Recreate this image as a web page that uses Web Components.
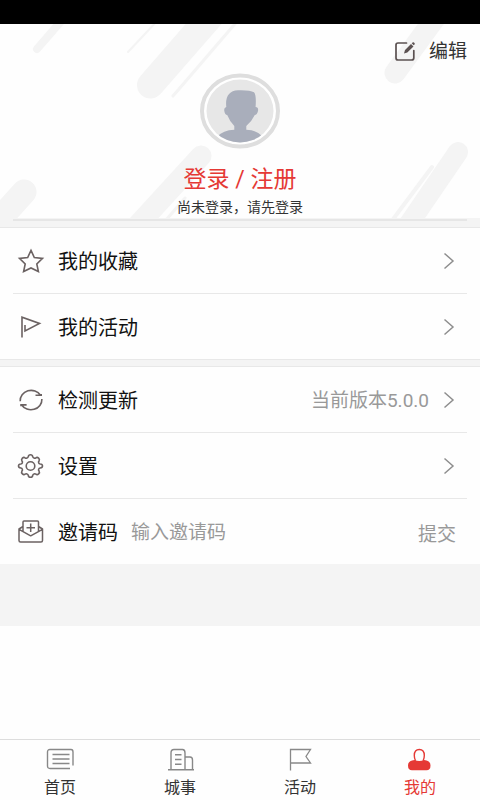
<!DOCTYPE html>
<html lang="zh-CN">
<head>
<meta charset="utf-8">
<meta name="viewport" content="width=device-width, initial-scale=1">
<title>我的</title>
<style>
  html, body { margin: 0; }
  body {
    font-family: Roboto, "Noto Sans CJK SC", sans-serif;
    color: #111;
    background: #fefefe;
    --muted: #999;
    --accent: #e53935;
    --line: #e8e8e8;
    --band: #f4f4f4;
  }
</style>
</head>
<body>
<profile-page></profile-page>

<script>
const icons = {
  edit: [24, 24, `<g fill="none" stroke="#5b5151" stroke-width="1.700" stroke-linecap="round"><path d="M13.500 3H5Q3 3 3 5V18Q3 20 5 20H18.500Q20.800 20 20.800 18V10.500"/></g><path d="M11 13.500l1-3.600 6-5.900 2.500 2.500-6.200 6zM18.700 3.300l.9-.8q.7-.5 1.400.1l.6.600q.5.700-.1 1.300l-.8.800z" fill="#5b5151"/>`],
  star: [28, 28, `<path d="M14 3.300l3.300 7.200 8.200.9-5.700 5.500 1.600 7.600-7.400-3.500-7.400 3.500 1.600-7.600L2.500 11.400l8.200-.9z" fill="none" stroke="#6b6262" stroke-width="1.600"/>`],
  pennant: [28, 28, `<path d="M5 24.500V4.200L22.500 10.500 8 18V12" fill="none" stroke="#6b6262" stroke-width="1.600"/>`],
  refresh: [28, 28, `<path d="M3.200 15.200A11 10.300 0 0 1 23.500 9.200M18.500 9.300h5.700V8M24.900 13A11 10.300 0 0 1 4.500 18.800M9.600 18.900H4v1.300" fill="none" stroke="#6b6262" stroke-width="1.600"/>`],
  gear: [28, 28, `<g fill="none" stroke="#6b6262" stroke-width="1.600" stroke-linejoin="round"><circle cx="13.500" cy="14" r="4.300"/><path d="M11.300 4.600Q11.500 2.700 13.500 2.700T15.700 4.600Q16 5.700 17 6Q18 6.500 18.900 5.800Q20.200 4.800 21.600 6.100T22 9.100Q21.200 10 21.700 11Q22 11.800 23.200 12Q25.500 12.200 25.500 14T23.200 16Q22 16.200 21.700 17Q21.200 18 22 18.900Q23 20.500 21.600 21.900T18.900 22.200Q18 21.500 17 22Q16 22.300 15.700 23.400Q15.500 25.300 13.500 25.300T11.300 23.400Q11 22.300 10 22Q9 21.500 8.100 22.200Q6.800 23.200 5.400 21.900T5 18.900Q5.800 18 5.300 17Q5 16.200 3.800 16Q1.500 15.800 1.500 14T3.800 12Q5 11.800 5.300 11Q5.800 10 5 9.100Q4 7.500 5.400 6.100T8.100 5.800Q9 6.500 10 6Q11 5.700 11.300 4.600z"/></g>`],
  invite: [28, 28, `<g fill="none" stroke="#6b6262" stroke-width="1.500" stroke-linejoin="round"><path d="M6 13.800V4Q6 3 7 3H20.500Q21.500 3 21.500 4V13.800M6 8.500L2 11V22.500Q2 24 3.500 24H24Q25.500 24 25.500 22.500V11L21.500 8.500M2 11.300L13.700 17.800 25.500 11.300M13.700 5.500v8.500M9.500 9.700h8.500"/></g>`],
  chevron: [12, 18, `<path d="M1.500 1.500L10 9 1.500 16.500" fill="none" stroke="#8e8e8e" stroke-width="1.500"/>`],
  news: [28, 24, `<path d="M24 20.500H4Q1.500 20.500 1.500 18V4Q1.500 1.500 4 1.500H25Q27 1.500 27 4V17.500M6.500 6.500H23.500M6.500 11H23.500M6.500 15.500H23.500" fill="none" stroke="#888" stroke-width="1.400"/>`],
  city: [28, 24, `<path d="M2 21.800H28M5 21.500V5Q5 1.500 8 1.500H16.500Q19 1.500 19 5V21.500M19 9H24Q26.500 9 26.500 12V21.500M9 6.800H15.500M9 11.500H15.500M9 16.200H15.500" fill="none" stroke="#888" stroke-width="1.400"/>`],
  flag: [28, 24, `<path d="M4.500 22.500V1.500H24.500L20 8.500 24.500 15H4.500" fill="none" stroke="#888" stroke-width="1.300"/>`],
  person: [28, 24, `<path d="M9.500 12.800Q8.300 10.500 8.300 7.500Q8.300 1.500 13.300 1.500T18.300 7.500Q18.300 10.500 17.100 12.800" fill="none" stroke="#e53935" stroke-width="1.400"/><path d="M8.500 12Q13.300 13.800 18.100 12Q24.500 12.500 24.500 17.500Q24.500 22.300 20.500 22.300H6Q2 22.300 2 17.500Q2 12.500 8.500 12z" fill="#e53935"/>`]
};

function define(name, html, setup) {
  const template = document.createElement('template');
  template.innerHTML = html;
  customElements.define(name, class extends HTMLElement {
    connectedCallback() {
      if (this.shadowRoot) return;
      const root = this.attachShadow({ mode: 'open' });
      root.append(template.content.cloneNode(true));
      if (setup) setup(this, root);
    }
  });
}

define('line-icon', `<style>
  :host { display: block; flex: none; }
  svg { display: block; }
</style>`, (host, root) => {
  const [w, h, body] = icons[host.getAttribute('name')];
  root.innerHTML += `<svg width="${w}" height="${h}" viewBox="0 0 ${w} ${h}" aria-hidden="true">${body}</svg>`;
});

define('user-avatar', `<style>
  :host { display: block; }
  svg { display: block; }
</style>
<svg width="80" height="76" viewBox="0 0 80 76" role="img" aria-label="头像">
  <defs><clipPath id="face"><ellipse cx="40" cy="38" rx="33.500" ry="31.500"/></clipPath></defs>
  <ellipse cx="40" cy="38" rx="38" ry="35.500" fill="#fff" stroke="#dedede" stroke-width="4"/>
  <ellipse cx="40" cy="38" rx="33.500" ry="31.500" fill="#e7e7e7"/>
  <path clip-path="url(#face)" d="M26.300 34Q24.500 18 38 17.200Q50 16.800 54 19.300Q56.500 22 55.600 34Q58.700 34 58 38Q57 42 54.800 42Q52 48 46.300 53V56.800Q56 57 62 63L58 72H22L17 64Q23 57 34.300 56.800V53Q29.500 48 27.200 42Q25 42 24.300 38Q23.700 34.500 26.300 34z" fill="#a9aebb"/>
</svg>`);

define('profile-header', `<style>
  :host { display: block; position: relative; background: #fefefe; overflow: hidden; }
  .stripes { position: absolute; inset: 0; width: 100%; height: 100%; }
  .content { position: relative; display: flex; flex-direction: column; align-items: center; }
  button { font: inherit; color: inherit; background: none; border: 0; padding: 0; cursor: pointer; }
  .edit { align-self: flex-end; display: flex; align-items: center; gap: 12px; margin: 14px 13px 0 0; font-size: 19px; line-height: 28px; color: #333; }
  user-avatar { margin-top: 7px; }
  .login { margin-top: 14px; font-size: 23px; line-height: 34px; color: var(--accent); }
  p { margin: 0; padding-bottom: 1px; font-size: 14px; line-height: 20px; color: #333; }
</style>
<svg class="stripes" viewBox="0 0 480 194" preserveAspectRatio="none" aria-hidden="true">
  <g stroke="#f4f4f4" stroke-linecap="round" fill="none">
    <path stroke-width="8" d="M37 25L63-5"/>
    <path stroke-width="2" d="M128 28L158-4"/>
    <path stroke-width="27" d="M150.500 61L221-20"/>
    <path stroke-width="3" d="M173 72L240-6"/>
    <path stroke-width="21" d="M201 132L126 214"/>
    <path stroke-width="3" d="M185 174L160 203"/>
    <path stroke-width="25" d="M24 168L-12 208"/>
    <path stroke-width="21" d="M395 49L444-18"/>
    <path stroke-width="20" d="M458 128L400 213"/>
    <path stroke-width="4" d="M432 143L388 202"/>
  </g>
</svg>
<div class="content">
  <button class="edit"><line-icon name="edit"></line-icon>编辑</button>
  <user-avatar></user-avatar>
  <button class="login">登录 / 注册</button>
  <p>尚未登录，请先登录</p>
</div>`);

define('menu-group', `<style>
  :host { display: block; background: #fefefe; border-top: 1px solid #e8e8e8; }
</style><slot></slot>`);

define('menu-row', `<style>
  :host { display: block; }
  button { box-sizing: border-box; display: flex; align-items: center; width: 100%; min-height: 66px; margin: 0; padding: 0 25px 0 17px; border: 0; background: linear-gradient(var(--line), var(--line)) center bottom / calc(100% - 26px) 1px no-repeat; font: inherit; font-size: 20px; line-height: 30px; color: inherit; text-align: left; cursor: pointer; }
  :host([last]) button { background-size: 100% 1px; }
  .name, .detail { padding-top: 2px; }
  .name { margin-left: 13px; flex: 1; }
  .detail { font-size: 19px; color: var(--muted); margin-right: 14px; }
</style>
<button><span id="icon"></span><span class="name"><slot></slot></span><span class="detail"><slot name="detail"></slot></span><line-icon name="chevron"></line-icon></button>`,
(host, root) => {
  const icon = document.createElement('line-icon');
  icon.setAttribute('name', host.getAttribute('icon'));
  root.getElementById('icon').replaceWith(icon);
});

define('invite-row', `<style>
  :host { display: block; }
  form { display: flex; align-items: center; min-height: 65px; margin: 0; padding: 0 24px 0 17px; font-size: 20px; line-height: 30px; }
  label { margin: 0 13px; padding-top: 2px; white-space: nowrap; }
  input, button { font: inherit; font-size: 19px; border: 0; padding: 2px 0 0; background: none; outline: 0; }
  input { flex: 1; min-width: 0; color: inherit; }
  input::placeholder { color: var(--muted); opacity: 1; }
  button { color: var(--muted); cursor: pointer; padding-top: 6px; }
</style>
<form><line-icon name="invite"></line-icon><label for="code">邀请码</label><input id="code" type="text" placeholder="输入邀请码"><button type="button">提交</button></form>`);

define('tab-link', `<style>
  :host { display: block; flex: 1; }
  a { display: flex; flex-direction: column; align-items: center; padding-top: 8px; color: #333; text-decoration: none; font-size: 16px; line-height: 24px; gap: 4px; }
  :host([active]) a { color: var(--accent); }
</style>
<a href="#"><slot name="icon"></slot><slot></slot></a>`);

define('tab-bar', `<style>
  :host { display: block; border-top: 1px solid #ddd; background: #fefefe; }
  nav { display: flex; }
</style>
<nav>
  <tab-link><line-icon slot="icon" name="news"></line-icon>首页</tab-link>
  <tab-link><line-icon slot="icon" name="city"></line-icon>城事</tab-link>
  <tab-link><line-icon slot="icon" name="flag"></line-icon>活动</tab-link>
  <tab-link active><line-icon slot="icon" name="person"></line-icon>我的</tab-link>
</nav>`);

define('profile-page', `<style>
  :host { display: flex; flex-direction: column; min-height: 100vh; }
  .status { height: 24px; background: #000; }
  .list { background: var(--band); display: flex; flex-direction: column; padding-bottom: 62px; }
  .rule { height: 2px; margin: 1px 13px 6px; background: #e6e6e6; }
  .second { margin-top: 6px; }
  tab-bar { margin-top: auto; }
</style>
<div class="status"></div>
<profile-header></profile-header>
<main class="list">
  <div class="rule"></div>
  <menu-group>
    <menu-row icon="star">我的收藏</menu-row>
    <menu-row icon="pennant" last>我的活动</menu-row>
  </menu-group>
  <menu-group class="second">
    <menu-row icon="refresh">检测更新<span slot="detail">当前版本5.0.0</span></menu-row>
    <menu-row icon="gear">设置</menu-row>
    <invite-row></invite-row>
  </menu-group>
</main>
<tab-bar></tab-bar>`);
</script>
</body>
</html>
